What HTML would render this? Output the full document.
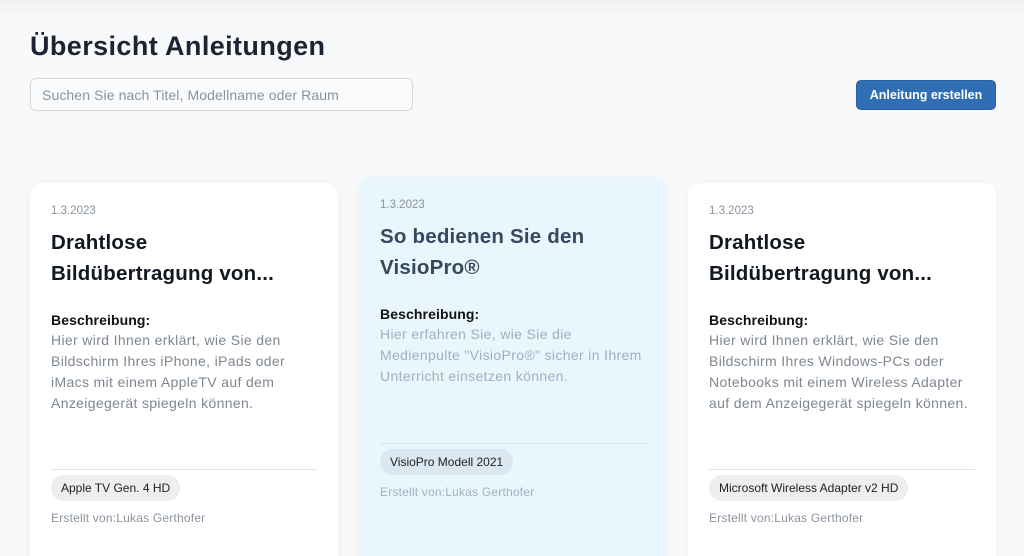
<!DOCTYPE html>
<html><head><meta charset="utf-8"><style>
*{box-sizing:border-box;margin:0;padding:0}
html,body{width:1024px;height:556px;overflow:hidden}
body{background:#f8f9fa;font-family:"Liberation Sans",sans-serif;position:relative}
.top{position:absolute;left:0;top:0;width:1024px;height:20px;background:linear-gradient(#eef0f2,#f8f9fa)}
h1{position:absolute;left:30px;top:31px;font-size:27px;font-weight:bold;color:#1b2430;letter-spacing:0.4px}
.search{position:absolute;left:30px;top:78px;width:383px;height:33px;border:1px solid #d4d8dc;border-radius:6px;background:#fafbfc;color:#8a939e;font-size:14px;padding:8px 11px;letter-spacing:0.1px}
.btn{position:absolute;left:856px;top:80px;width:140px;height:30px;background:#2f6eb3;border:1px solid #285f9c;border-radius:5px;color:#fff;font-size:12.5px;font-weight:bold;text-align:center;line-height:28px}
.card{position:absolute;width:308px;height:400px;background:#fff;border-radius:12px;box-shadow:0 2px 10px rgba(0,0,0,0.04);padding:0 21px}
.card.hl{background:#eaf6fd}
.date{position:absolute;top:22px;left:21px;font-size:11.5px;color:#8a939e}
.title{position:absolute;top:44px;left:21px;width:275px;font-size:20.5px;font-weight:bold;line-height:31px;color:#111820;letter-spacing:0.2px}
.hl .title{color:#35495c}
.lab{position:absolute;top:129px;left:21px;font-size:14px;font-weight:bold;color:#111;letter-spacing:0.1px}
.desc{position:absolute;top:147px;left:21px;width:262px;font-size:14px;line-height:21px;color:#7e8791;letter-spacing:0.35px}
.hl .desc{color:#9fb0bf}
.hr{position:absolute;top:286px;left:21px;right:21px;border-top:1px solid #e2e5e8}
.hl .hr{border-color:#d6e4ee}
.chip{position:absolute;top:292px;left:21px;height:26px;padding:0 10px;border-radius:13px;background:#eceeef;font-size:12px;line-height:26px;color:#222}
.hl .chip{background:#dbe8f1}
.by{position:absolute;top:328px;left:21px;font-size:12px;color:#8a939e;letter-spacing:0.2px}
.hl .by{color:#a3b1bd}
</style></head><body>
<div class="top"></div>
<h1>Übersicht Anleitungen</h1>
<div class="search">Suchen Sie nach Titel, Modellname oder Raum</div>
<div class="btn">Anleitung erstellen</div>

<div class="card" style="left:30px;top:183px">
<div class="date">1.3.2023</div>
<div class="title">Drahtlose<br>Bildübertragung von...</div>
<div class="lab">Beschreibung:</div>
<div class="desc">Hier wird Ihnen erklärt, wie Sie den Bildschirm Ihres iPhone, iPads oder iMacs mit einem AppleTV auf dem Anzeigegerät spiegeln können.</div>
<div class="hr"></div>
<div class="chip">Apple TV Gen. 4 HD</div>
<div class="by">Erstellt von:Lukas Gerthofer</div>
</div>

<div class="card hl" style="left:359px;top:177px">
<div class="date">1.3.2023</div>
<div class="title">So bedienen Sie den<br>VisioPro®</div>
<div class="lab">Beschreibung:</div>
<div class="desc">Hier erfahren Sie, wie Sie die Medienpulte "VisioPro®" sicher in Ihrem Unterricht einsetzen können.</div>
<div class="hr" style="top:266px"></div>
<div class="chip" style="top:272px">VisioPro Modell 2021</div>
<div class="by" style="top:308px">Erstellt von:Lukas Gerthofer</div>
</div>

<div class="card" style="left:688px;top:183px">
<div class="date">1.3.2023</div>
<div class="title">Drahtlose<br>Bildübertragung von...</div>
<div class="lab">Beschreibung:</div>
<div class="desc">Hier wird Ihnen erklärt, wie Sie den Bildschirm Ihres Windows-PCs oder Notebooks mit einem Wireless Adapter auf dem Anzeigegerät spiegeln können.</div>
<div class="hr"></div>
<div class="chip">Microsoft Wireless Adapter v2 HD</div>
<div class="by">Erstellt von:Lukas Gerthofer</div>
</div>
</body></html>
